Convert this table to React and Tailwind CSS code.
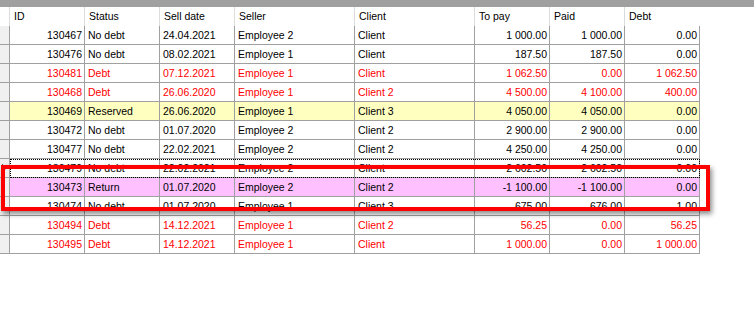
import React from 'react';

const columns = [
  { key: 'id', title: 'ID', width: 'w-[75px]', align: 'right' },
  { key: 'status', title: 'Status', width: 'w-[75px]' },
  { key: 'date', title: 'Sell date', width: 'w-[75px]' },
  { key: 'seller', title: 'Seller', width: 'w-[120px]' },
  { key: 'client', title: 'Client', width: 'w-[120px]' },
  { key: 'toPay', title: 'To pay', width: 'w-[75px]', align: 'right' },
  { key: 'paid', title: 'Paid', width: 'w-[75px]', align: 'right' },
  { key: 'debt', title: 'Debt', width: 'w-[75px]', align: 'right' },
];

const rows = [
  { id: '130467', status: 'No debt', date: '24.04.2021', seller: 'Employee 2', client: 'Client', toPay: '1 000.00', paid: '1 000.00', debt: '0.00' },
  { id: '130476', status: 'No debt', date: '08.02.2021', seller: 'Employee 1', client: 'Client', toPay: '187.50', paid: '187.50', debt: '0.00' },
  { id: '130481', status: 'Debt', date: '07.12.2021', seller: 'Employee 1', client: 'Client', toPay: '1 062.50', paid: '0.00', debt: '1 062.50', kind: 'debt' },
  { id: '130468', status: 'Debt', date: '26.06.2020', seller: 'Employee 1', client: 'Client 2', toPay: '4 500.00', paid: '4 100.00', debt: '400.00', kind: 'debt' },
  { id: '130469', status: 'Reserved', date: '26.06.2020', seller: 'Employee 1', client: 'Client 3', toPay: '4 050.00', paid: '4 050.00', debt: '0.00', kind: 'reserved' },
  { id: '130472', status: 'No debt', date: '01.07.2020', seller: 'Employee 2', client: 'Client 2', toPay: '2 900.00', paid: '2 900.00', debt: '0.00' },
  { id: '130477', status: 'No debt', date: '22.02.2021', seller: 'Employee 2', client: 'Client 2', toPay: '4 250.00', paid: '4 250.00', debt: '0.00' },
  { id: '130479', status: 'No debt', date: '22.02.2021', seller: 'Employee 2', client: 'Client', toPay: '2 602.50', paid: '2 602.50', debt: '0.00', focused: true },
  { id: '130473', status: 'Return', date: '01.07.2020', seller: 'Employee 2', client: 'Client 2', toPay: '-1 100.00', paid: '-1 100.00', debt: '0.00', kind: 'return' },
  { id: '130474', status: 'No debt', date: '01.07.2020', seller: 'Employee 1', client: 'Client 3', toPay: '675.00', paid: '676.00', debt: '-1.00' },
  { id: '130494', status: 'Debt', date: '14.12.2021', seller: 'Employee 1', client: 'Client 2', toPay: '56.25', paid: '0.00', debt: '56.25', kind: 'debt' },
  { id: '130495', status: 'Debt', date: '14.12.2021', seller: 'Employee 1', client: 'Client', toPay: '1 000.00', paid: '0.00', debt: '1 000.00', kind: 'debt' },
];

const rowStyle = (kind) => {
  if (kind === 'debt') return 'text-[#ff0000]';
  if (kind === 'reserved') return 'bg-[#ffffc0] text-black';
  if (kind === 'return') return 'bg-[#ffc0ff] text-black';
  return 'text-black';
};

export default function App() {
  return (
    <div
      className="relative w-[754px] h-[312px] overflow-hidden bg-white text-[10.5px] leading-none"
      style={{ fontFamily: '"Liberation Sans", Arial, sans-serif' }}
    >
      {/* Top bar */}
      <div className="h-[7px] bg-[#a0a0a0]" />

      {/* Header */}
      <div className="flex h-[19px]">
        <div className="w-[10px] border-r border-[#dcdcdc]" />
        {columns.map((col, i) => (
          <div
            key={col.key}
            className={`${i === columns.length - 1 ? 'flex-1' : `${col.width} border-r border-[#dcdcdc]`} flex items-center pl-[4px]`}
          >
            {col.title}
          </div>
        ))}
      </div>

      {/* Rows */}
      {rows.map((row) => (
        <div key={row.id} className="relative flex h-[19px]">
          <div className="relative w-[10px] bg-[#f0f0f0] border-r border-b border-[#a0a0a0]">
            {row.focused && (
              <svg className="absolute left-[2px] top-[4px]" width="6" height="10" viewBox="0 0 6 10">
                <polygon points="0,1 5,5 0,9" fill="#000" />
              </svg>
            )}
          </div>
          <div className={`flex ${rowStyle(row.kind)}`}>
            {columns.map((col) => (
              <div
                key={col.key}
                className={`${col.width} flex items-center whitespace-nowrap border-r border-b border-[#a0a0a0] ${
                  col.align === 'right' ? 'justify-end pr-[2px]' : 'pl-[3px]'
                }`}
              >
                {row[col.key].replace(/ /g, '\u00a0')}
              </div>
            ))}
          </div>
          {row.focused && (
            <div className="absolute left-[10px] top-0 w-[690px] h-[19px] border border-dotted border-black" />
          )}
        </div>
      ))}

      {/* Annotation frame */}
      <div className="absolute left-[1px] top-[165px] w-[709px] h-[46px] border-[4px] border-[#ff0000] shadow-[2px_3px_5px_rgba(0,0,0,0.45)]" />
    </div>
  );
}
